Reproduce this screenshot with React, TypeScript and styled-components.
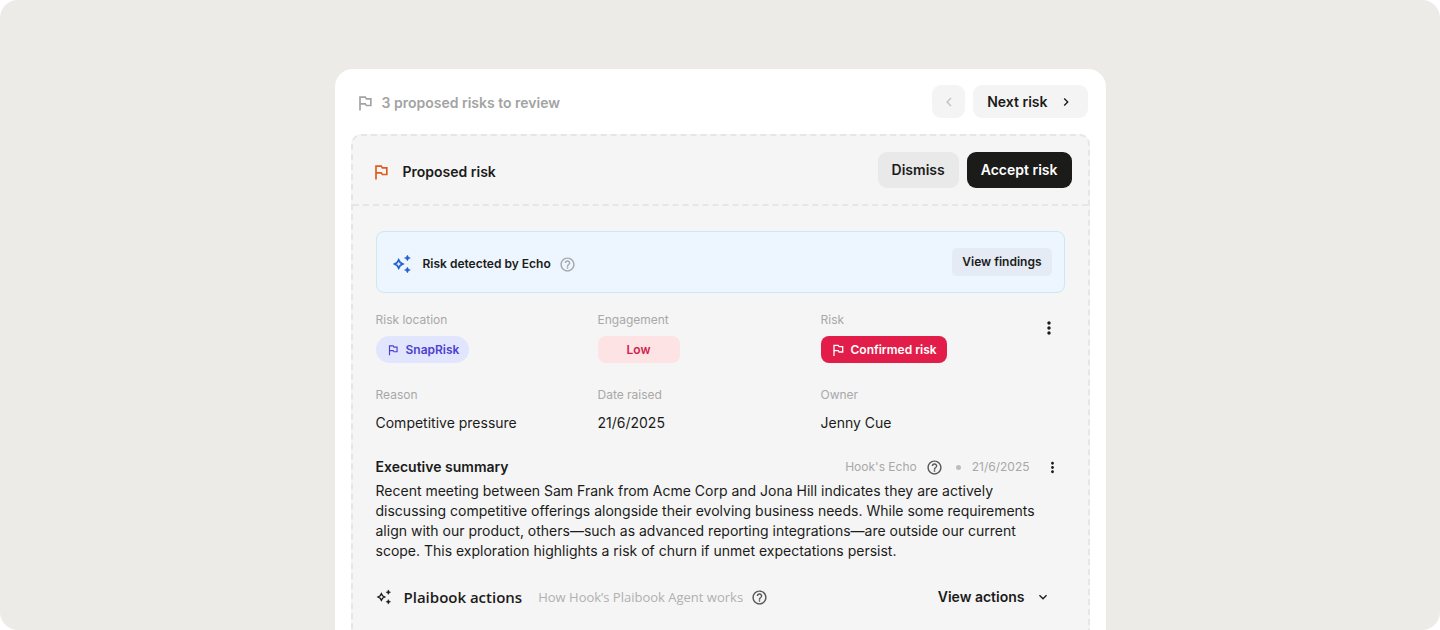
import React from "react";
import styled, { createGlobalStyle } from "styled-components";
import { MdOutlinedFlag, MdHelpOutline, MdMoreVert, MdChevronLeft, MdChevronRight, MdExpandMore } from "react-icons/md";

const GlobalStyle = createGlobalStyle`
  *, *::before, *::after { box-sizing: border-box; }
  body { margin: 0; background: #ffffff; font-family: Inter, "Liberation Sans", sans-serif; color: #1b1b1a; }
  button { font: inherit; color: inherit; border: 0; padding: 0; background: none; cursor: pointer; }
  h1, h2, h3, p, dl, dd { margin: 0; }
  svg { display: block; flex: none; }
`;

const Stage = styled.main`
  display: flex;
  justify-content: center;
  min-height: 100vh;
  padding: 69px 24px 0;
  background: #ecebe7;
  border-radius: 18px;
`;

const Card = styled.section`
  display: flex;
  flex-direction: column;
  width: 100%;
  max-width: 771px;
  padding: 16px 16px 0;
  background: #ffffff;
  border-radius: 18px 18px 0 0;
`;

const Row = styled.div<{ $gap?: number }>`
  display: flex;
  align-items: center;
  gap: ${({ $gap }) => $gap ?? 8}px;
`;

const CardHeader = styled.header`
  display: flex;
  align-items: center;
  justify-content: space-between;
  height: 33px;
  margin-bottom: 16px;
  padding: 0 2px 0 4px;
`;

const ReviewTitle = styled.h1`
  display: flex;
  align-items: center;
  gap: 7px;
  padding-top: 3px;
  font-size: 14px;
  line-height: 20px;
  font-weight: 600;
  color: #a3a3a3;
`;

type Tone = "soft" | "grey" | "dark" | "blue" | "plain";

const heights: Record<Tone, number> = { soft: 33, grey: 36, dark: 36, blue: 28, plain: 24 };
const fills: Record<Tone, string> = {
  soft: "#f4f4f4",
  grey: "#e9e9e9",
  dark: "#1b1b19",
  blue: "#e4ebf4",
  plain: "transparent",
};

const Button = styled.button<{ $tone: Tone }>`
  display: flex;
  align-items: center;
  justify-content: center;
  gap: 10px;
  height: ${({ $tone }) => heights[$tone]}px;
  padding: 0 ${({ $tone }) => ($tone === "blue" ? 10 : 14)}px;
  border-radius: ${({ $tone }) => ($tone === "blue" ? 5 : 9)}px;
  background: ${({ $tone }) => fills[$tone]};
  color: ${({ $tone }) => ($tone === "dark" ? "#ffffff" : "#1b1b1a")};
  font-size: ${({ $tone }) => ($tone === "blue" ? 12 : 14)}px;
  line-height: 18px;
  font-weight: 600;
  white-space: nowrap;
`;

const SquareButton = styled(Button)`
  width: 33px;
  padding: 0;
  color: #c4c4c4;
`;

const Panel = styled.article`
  flex: 1;
  border: 2px dashed #e6e6e6;
  border-bottom: 0;
  border-radius: 10px 10px 0 0;
  background: #f5f5f5;
`;

const PanelHeader = styled.header`
  display: flex;
  align-items: center;
  justify-content: space-between;
  height: 70px;
  padding: 0 16px 0 18px;
  border-bottom: 2px dashed #e6e6e6;
`;

const PanelTitle = styled.h2`
  display: flex;
  align-items: center;
  gap: 12px;
  padding-top: 3px;
  font-size: 14px;
  line-height: 20px;
  font-weight: 600;
  svg { color: #dd5c1e; }
`;

const PanelBody = styled.div`
  padding: 25px 23px 16px;
`;

const Notice = styled.div`
  display: flex;
  align-items: center;
  justify-content: space-between;
  height: 62px;
  padding: 0 12px 0 15px;
  border: 1px solid #c9e9f4;
  border-radius: 8px;
  background: #edf5fe;
`;

const NoticeText = styled.div`
  display: flex;
  align-items: center;
  gap: 8px;
  padding-top: 4px;
  font-size: 12px;
  line-height: 20px;
  font-weight: 600;
  svg:first-child { margin-right: 3px; color: #2361d2; }
`;

const Details = styled.div`
  display: flex;
  align-items: flex-start;
  justify-content: space-between;
  margin-top: 19px;
`;

const Fields = styled.dl`
  flex: 1;
  display: grid;
  grid-template-columns: 222px 223px 1fr;
  row-gap: 24px;
`;

const FieldName = styled.dt`
  font-size: 12px;
  line-height: 16px;
  color: #a8a8a8;
`;

const FieldValue = styled.dd<{ $text?: boolean }>`
  display: flex;
  align-items: center;
  height: ${({ $text }) => ($text ? 22 : 27)}px;
  margin-top: 8px;
  font-size: 14px;
`;

const Tag = styled.span<{ $tone: "indigo" | "pink" | "red" }>`
  display: inline-flex;
  align-items: center;
  justify-content: center;
  gap: ${({ $tone }) => ($tone === "indigo" ? 6 : 5)}px;
  height: 27px;
  min-width: 82px;
  padding: ${({ $tone }) => ($tone === "red" ? "0 10px 0 9px" : "0 10px")};
  border-radius: ${({ $tone }) => ($tone === "indigo" ? 14 : 8)}px;
  background: ${({ $tone }) => ({ indigo: "#e1e6fe", pink: "#fee3e5", red: "#e31d49" })[$tone]};
  color: ${({ $tone }) => ({ indigo: "#4c40cf", pink: "#cf1f4c", red: "#ffffff" })[$tone]};
  font-size: 12px;
  font-weight: 600;
`;

const IconButton = styled.button`
  display: flex;
  color: #1b1b1a;
`;

const DetailsMenu = styled(IconButton)`
  padding: 6px 6px 0 0;
`;

const SummaryHeader = styled.header`
  display: flex;
  align-items: center;
  justify-content: space-between;
  height: 20px;
  margin-top: 24px;
`;

const Heading = styled.h3`
  font-size: 14px;
  line-height: 20px;
  font-weight: 600;
`;

const BrandHeading = styled(Heading)`
  font-family: "Open Sans", sans-serif;
  font-size: 15px;
`;

const Meta = styled.div`
  display: flex;
  align-items: center;
  gap: 9px;
  padding-right: 4px;
  font-size: 12px;
  line-height: 20px;
  color: #a8a8a8;
  ${IconButton} { margin-left: 5px; }
`;

const Help = styled(MdHelpOutline)<{ $faint?: boolean }>`
  width: 17px;
  height: 17px;
  color: ${({ $faint }) => ($faint ? "#a3a6aa" : "#555555")};
`;

const Dot = styled.span`
  width: 5px;
  height: 5px;
  margin: 0 2px 0 4px;
  border-radius: 50%;
  background: #bdbdbd;
`;

const Summary = styled.p`
  margin-top: 4px;
  padding-right: 16px;
  font-size: 14px;
  line-height: 20px;
`;

const Actions = styled.footer`
  display: flex;
  align-items: center;
  justify-content: space-between;
  height: 24px;
  margin-top: 24px;
`;

const Hint = styled.span`
  font-family: "Open Sans", sans-serif;
  font-size: 13px;
  line-height: 20px;
  color: #b0b0b0;
`;

const Sparkle = ({ size }: { size: number }) => (
  <svg width={size} height={size} viewBox="0 0 20 20" fill="currentColor" aria-hidden="true">
    <path d="M6.7 5.8 8.2 8.5 10.9 10 8.2 11.5 6.7 14.2 5.2 11.5 2.5 10 5.2 8.5z" fill="none" stroke="currentColor" strokeWidth="1.7" />
    <path d="M15.4 1l1 2 2 1-2 1-1 2-1-2-2-1 2-1z" stroke="currentColor" strokeWidth=".4" />
    <path d="M15.4 13l1 2 2 1-2 1-1 2-1-2-2-1 2-1z" stroke="currentColor" strokeWidth=".4" />
  </svg>
);

export default function App() {
  return (
    <>
      <GlobalStyle />
      <Stage>
        <Card>
          <CardHeader>
            <ReviewTitle><MdOutlinedFlag size={20} />3 proposed risks to review</ReviewTitle>
            <Row>
              <SquareButton $tone="soft" aria-label="Previous risk"><MdChevronLeft size={18} /></SquareButton>
              <Button $tone="soft">Next risk<MdChevronRight size={16} /></Button>
            </Row>
          </CardHeader>
          <Panel>
            <PanelHeader>
              <PanelTitle><MdOutlinedFlag size={20} />Proposed risk</PanelTitle>
              <Row>
                <Button $tone="grey">Dismiss</Button>
                <Button $tone="dark">Accept risk</Button>
              </Row>
            </PanelHeader>
            <PanelBody>
              <Notice>
                <NoticeText><Sparkle size={20} />Risk detected by Echo<Help $faint /></NoticeText>
                <Button $tone="blue">View findings</Button>
              </Notice>
              <Details>
                <Fields>
                  <div><FieldName>Risk location</FieldName><FieldValue><Tag $tone="indigo"><MdOutlinedFlag size={14} />SnapRisk</Tag></FieldValue></div>
                  <div><FieldName>Engagement</FieldName><FieldValue><Tag $tone="pink">Low</Tag></FieldValue></div>
                  <div><FieldName>Risk</FieldName><FieldValue><Tag $tone="red"><MdOutlinedFlag size={16} />Confirmed risk</Tag></FieldValue></div>
                  <div><FieldName>Reason</FieldName><FieldValue $text>Competitive pressure</FieldValue></div>
                  <div><FieldName>Date raised</FieldName><FieldValue $text>21/6/2025</FieldValue></div>
                  <div><FieldName>Owner</FieldName><FieldValue $text>Jenny Cue</FieldValue></div>
                </Fields>
                <DetailsMenu aria-label="Risk options"><MdMoreVert size={20} /></DetailsMenu>
              </Details>
              <SummaryHeader>
                <Heading>Executive summary</Heading>
                <Meta>Hook's Echo<Help /><Dot />21/6/2025<IconButton aria-label="Summary options"><MdMoreVert size={17} /></IconButton></Meta>
              </SummaryHeader>
              <Summary>
                Recent meeting between Sam Frank from Acme Corp and Jona Hill indicates they are actively discussing competitive offerings alongside their evolving business needs. While some requirements align with our product, others—such as advanced reporting integrations—are outside our current scope. This exploration highlights a risk of churn if unmet expectations persist.
              </Summary>
              <Actions>
                <Row $gap={16}>
                  <Row $gap={12}>
                    <Sparkle size={16} />
                    <BrandHeading>Plaibook actions</BrandHeading>
                  </Row>
                  <Row>
                    <Hint>How Hook’s Plaibook Agent works</Hint>
                    <Help />
                  </Row>
                </Row>
                <Button $tone="plain">View actions<MdExpandMore size={16} /></Button>
              </Actions>
            </PanelBody>
          </Panel>
        </Card>
      </Stage>
    </>
  );
}
